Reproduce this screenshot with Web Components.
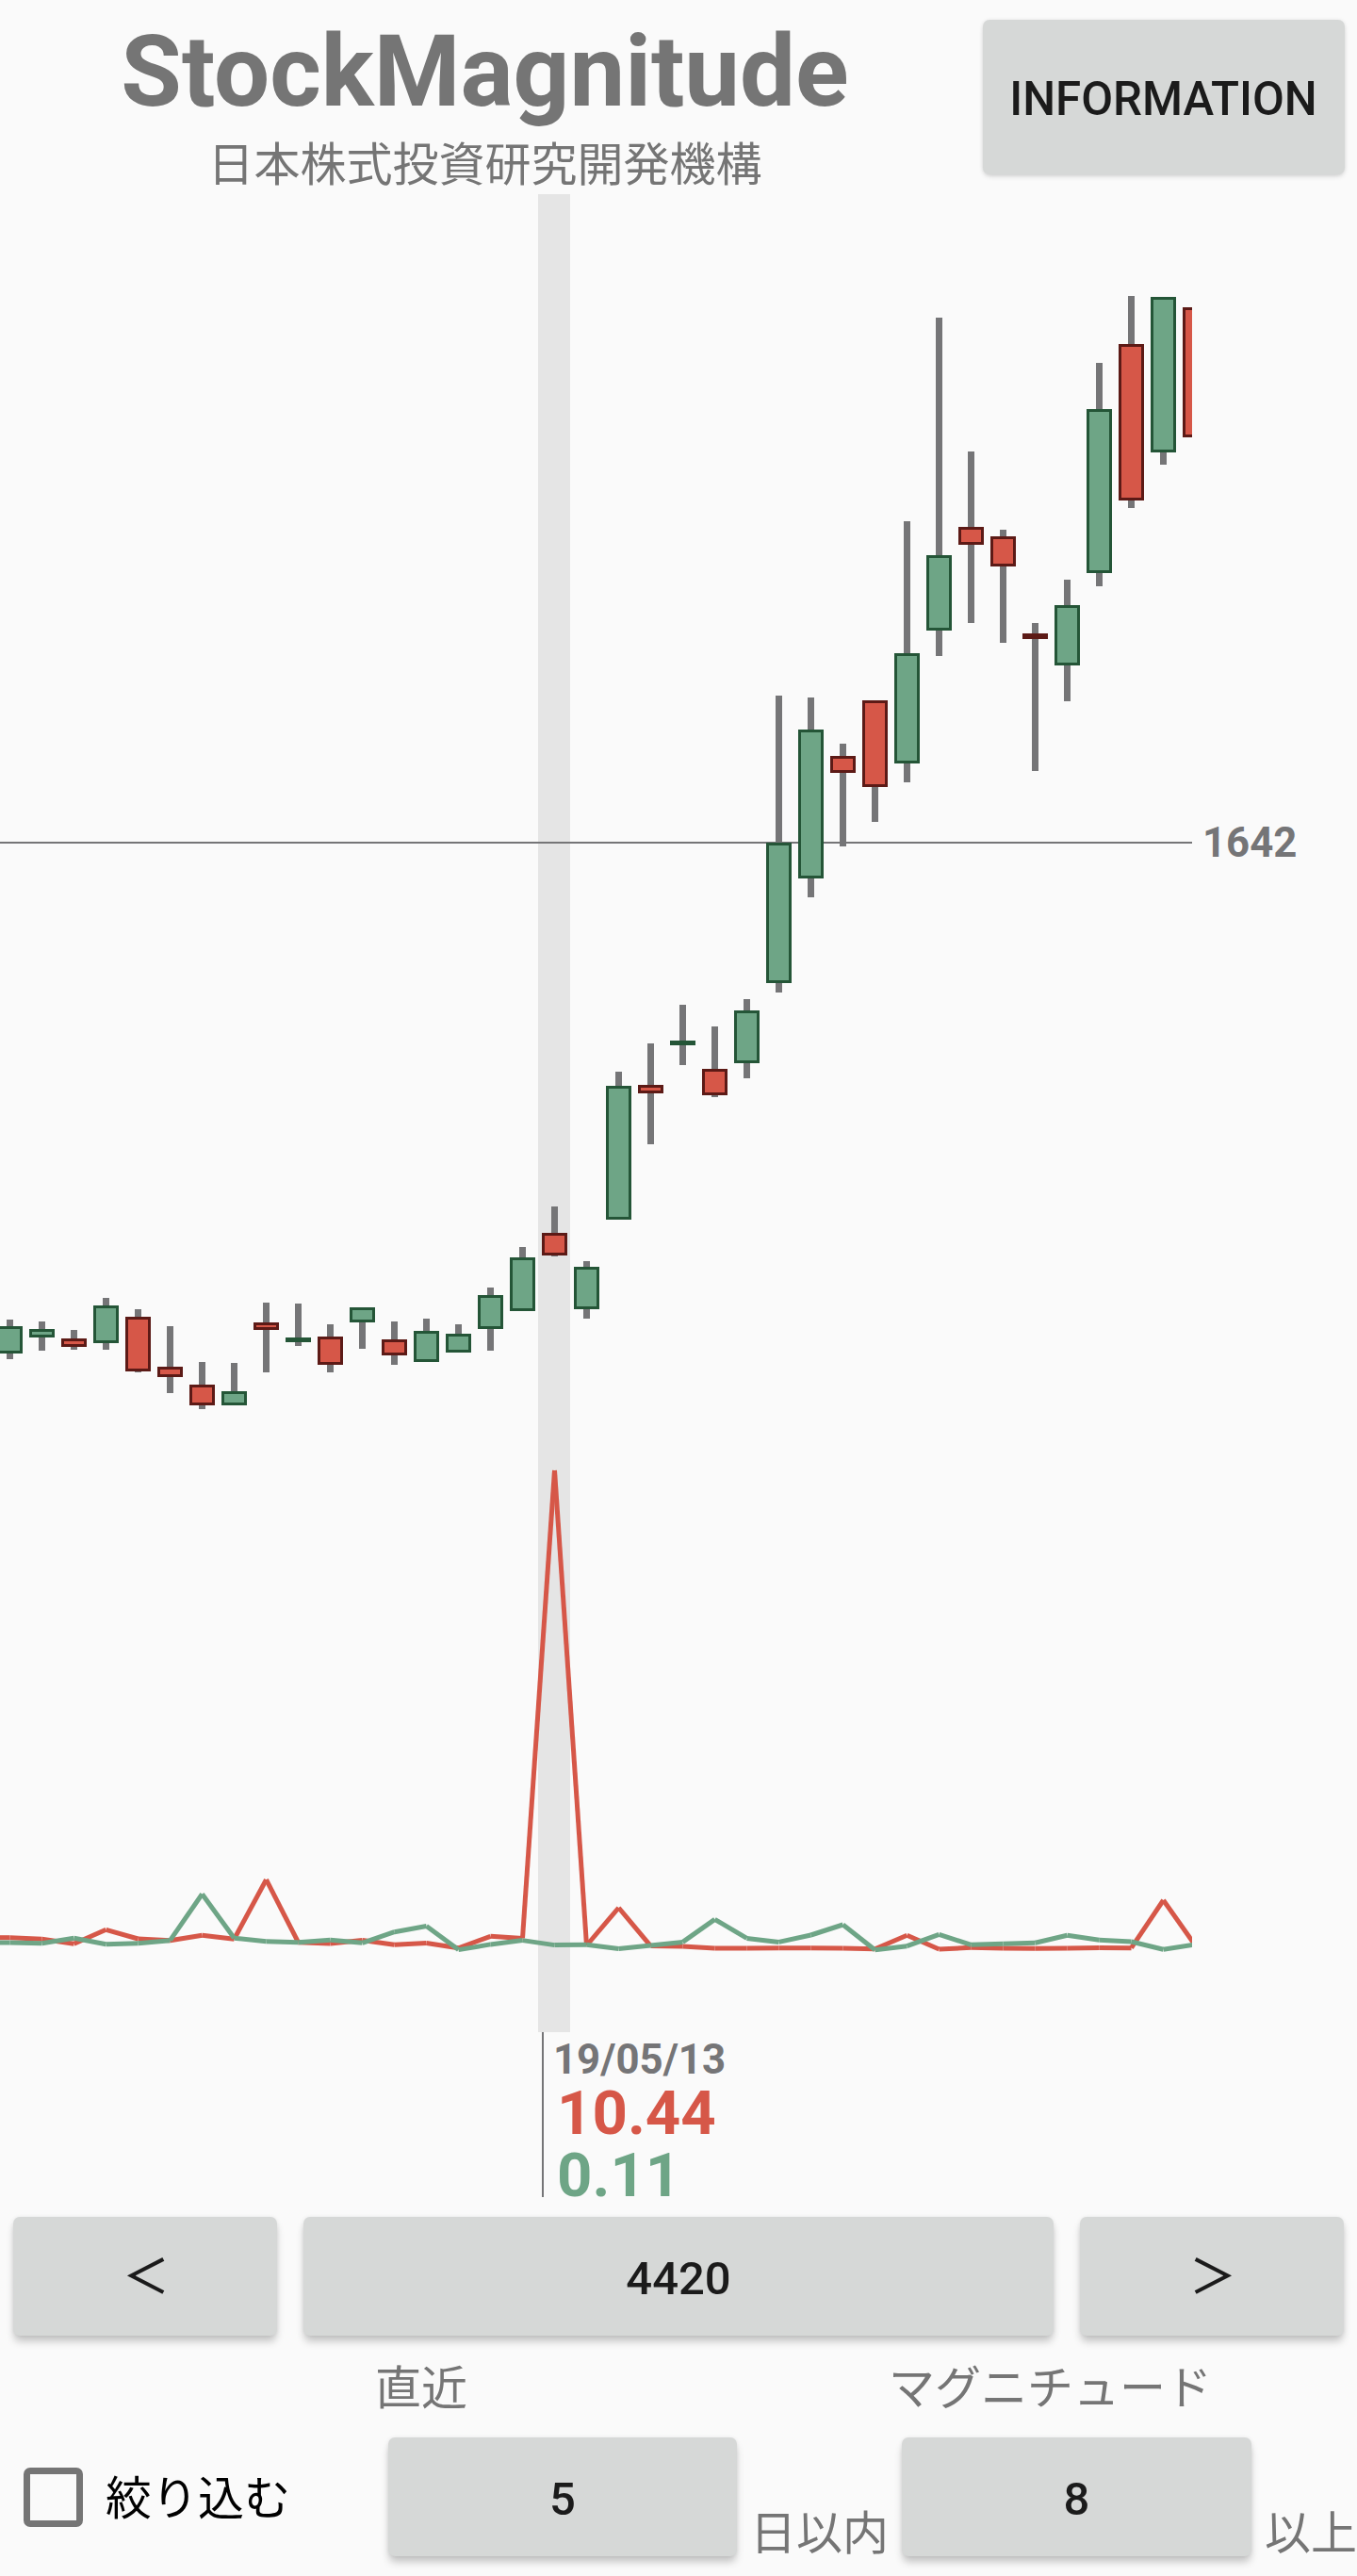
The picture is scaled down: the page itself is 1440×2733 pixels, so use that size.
<!DOCTYPE html>
<html lang="ja">
<head>
<meta charset="utf-8">
<title>StockMagnitude</title>
<style>
    body {
        margin: 0;
        background: #fafafa;
        font-family: Roboto, "Noto Sans CJK JP", sans-serif;
    }
</style>
</head>
<body>
<stock-app></stock-app>

<script>
// [上ヒゲ, 下ヒゲ, 実体上端, 実体下端, 陽線=1 / 陰線=0]
const CANDLES = [
    [1400, 1442, 1407, 1436, 1], [1402, 1433, 1410, 1419, 1], [1411, 1432, 1420, 1429, 0],
    [1377, 1432, 1385, 1425, 1], [1389, 1456, 1397, 1455, 0], [1407, 1478, 1450, 1461, 0],
    [1445, 1495, 1469, 1491, 0], [1446, 1491, 1476, 1491, 1], [1382, 1456, 1403, 1411, 0],
    [1383, 1428, 1419, 1424, 1], [1405, 1456, 1418, 1448, 0], [1387, 1431, 1387, 1403, 1],
    [1402, 1448, 1421, 1438, 0], [1399, 1445, 1412, 1445, 1], [1405, 1435, 1415, 1435, 1],
    [1366, 1433, 1374, 1410, 1], [1323, 1391, 1334, 1391, 1], [1280, 1333, 1308, 1332, 0],
    [1338, 1399, 1344, 1389, 1], [1137, 1294, 1152, 1294, 1], [1107, 1214, 1151, 1160, 0],
    [1066, 1130, 1104, 1109, 1], [1089, 1164, 1134, 1162, 0], [1060, 1144, 1072, 1128, 1],
    [738, 1053, 894, 1043, 1], [740, 952, 774, 932, 1], [789, 898, 802, 820, 0],
    [743, 872, 743, 835, 0], [553, 830, 693, 810, 1], [337, 696, 589, 669, 1],
    [479, 661, 559, 578, 0], [562, 682, 569, 601, 0], [661, 818, 672, 678, 0],
    [615, 744, 642, 706, 1], [385, 622, 434, 608, 1], [314, 539, 365, 531, 0],
    [315, 493, 315, 480, 1], [326, 464, 326, 464, 0]
];

const RED_LINE = [
    2055.7, 2057.3, 2062.3, 2047.3, 2057, 2058.7, 2053.3, 2057.3, 1994.2, 2060.7,
    2062, 2058.5, 2063.3, 2061.5, 2066.8, 2054.3, 2056.4, 1560, 2064, 2024,
    2064.6, 2065, 2067, 2067, 2066.8, 2066.8, 2067, 2067.7, 2053.3, 2068,
    2066.3, 2067, 2067.3, 2067, 2066.5, 2066.7, 2016, 2064
];

const GREEN_LINE = [
    2061, 2061.7, 2056.3, 2062.7, 2061.7, 2058.7, 2009.5, 2056.3, 2059.7, 2060.7,
    2058.3, 2061.3, 2049.7, 2043.5, 2068.6, 2062.9, 2058.6, 2063.6, 2063.2, 2067.5,
    2064, 2060.4, 2036.4, 2056.4, 2060.4, 2053, 2042, 2068.7, 2064.7, 2052.3,
    2063.3, 2062.3, 2061.3, 2053.3, 2058.3, 2060, 2068.3, 2063
];

const STEP = 34;
const FIRST_X = 10.5;
const xAt = (i) => FIRST_X + STEP * i;

class StockChart extends HTMLElement {
    constructor() {
        super();
        const shadow = this.attachShadow({ mode: 'open' });
        shadow.innerHTML = `
            <style>
                :host {
                    display: flex;
                    height: 1950px;
                }
                svg {
                    display: block;
                    flex: none;
                }
                .axis {
                    padding: 663px 0 0 11px;
                    color: #757577;
                    font-size: 43.75px;
                    line-height: 50px;
                    font-weight: 700;
                }
            </style>
            <svg width="1265" height="1950" viewBox="0 206 1265 1950"></svg>
            <div class="axis"><slot></slot></div>
        `;
    }

    connectedCallback() {
        this.render();
    }

    render() {
        const parts = [
            '<rect x="571" y="206" width="34" height="1950" fill="#e5e5e5"/>',
            '<rect x="0" y="893" width="1265" height="2" fill="#757577"/>'
        ];
        CANDLES.forEach(([high, low, top, bottom, up], i) => {
            const x = xAt(i);
            // 最後の足は実体の左側だけ見える
            if (i < CANDLES.length - 1) {
                parts.push(`<rect x="${x - 3.5}" y="${high}" width="7" height="${low - high}" fill="#757577"/>`);
            }
            parts.push(`<rect x="${x - 13.5}" y="${top}" width="27" height="${bottom - top}" fill="${up ? '#245537' : '#5c1a16'}"/>`);
            if (bottom - top > 6) {
                parts.push(`<rect x="${x - 10.5}" y="${top + 3}" width="21" height="${bottom - top - 6}" fill="${up ? '#6ea586' : '#d65748'}"/>`);
            }
        });
        parts.push(this.line(RED_LINE, '#d65748'), this.line(GREEN_LINE, '#6ea586'));
        this.shadowRoot.querySelector('svg').innerHTML = parts.join('');
    }

    // 一区間ずつ独立した線分で描く
    line(points, color) {
        let out = `<line x1="-2" y1="${points[0]}" x2="${FIRST_X}" y2="${points[0]}" stroke="${color}" stroke-width="5"/>`;
        for (let i = 1; i < points.length; i++) {
            out += `<line x1="${xAt(i - 1)}" y1="${points[i - 1]}" x2="${xAt(i)}" y2="${points[i]}" stroke="${color}" stroke-width="5"/>`;
        }
        return out;
    }
}

class ChartLegend extends HTMLElement {
    constructor() {
        super();
        const shadow = this.attachShadow({ mode: 'open' });
        shadow.innerHTML = `
            <style>
                :host {
                    display: block;
                    box-sizing: border-box;
                    height: 175px;
                    margin-left: 575px;
                    border-left: 2px solid #757577;
                    overflow: hidden;
                    font-weight: 700;
                    white-space: nowrap;
                }
                .date {
                    padding: 3px 0 0 10px;
                    font-size: 43.75px;
                    line-height: 52px;
                    height: 50px;
                    color: #757577;
                }
                .value {
                    padding-left: 14px;
                    font-size: 65.3px;
                    line-height: 66px;
                }
                .up { color: #d65748; }
                .down { color: #6ea586; }
            </style>
            <div class="date"></div>
            <div class="value up"></div>
            <div class="value down"></div>
        `;
    }

    connectedCallback() {
        const root = this.shadowRoot;
        root.querySelector('.date').textContent = this.getAttribute('date');
        root.querySelector('.up').textContent = this.getAttribute('up');
        root.querySelector('.down').textContent = this.getAttribute('down');
    }
}

class PushButton extends HTMLElement {
    constructor() {
        super();
        const shadow = this.attachShadow({ mode: 'open' });
        shadow.innerHTML = `
            <style>
                :host {
                    display: flex;
                    align-items: center;
                    justify-content: center;
                    box-sizing: border-box;
                    height: 126px;
                    padding-top: 4px;
                    border-radius: 7px;
                    background: #d6d8d7;
                    box-shadow: 0 7px 8px -1px rgba(0, 0, 0, 0.22), 0 0 4px rgba(0, 0, 0, 0.07);
                    color: #1b1b1b;
                    font-size: 49px;
                    line-height: 57px;
                    font-weight: 500;
                    white-space: nowrap;
                }
            </style>
            <slot></slot>
        `;
    }
}

class CheckItem extends HTMLElement {
    constructor() {
        super();
        const shadow = this.attachShadow({ mode: 'open' });
        shadow.innerHTML = `
            <style>
                :host {
                    display: flex;
                    align-items: center;
                    gap: 24px;
                    box-sizing: border-box;
                    height: 126px;
                    color: #000;
                    font-size: 49px;
                    line-height: 72px;
                    white-space: nowrap;
                }
                .box {
                    box-sizing: border-box;
                    width: 63px;
                    height: 63px;
                    border: 7px solid #757575;
                    border-radius: 7px;
                }
                .text { padding-top: 5px; }
            </style>
            <div class="box"></div>
            <div class="text"><slot></slot></div>
        `;
    }
}

class StockApp extends HTMLElement {
    constructor() {
        super();
        const shadow = this.attachShadow({ mode: 'open' });
        shadow.innerHTML = `
            <style>
                :host {
                    display: block;
                    box-sizing: border-box;
                    width: 1440px;
                    height: 2733px;
                    overflow: hidden;
                    color: #757575;
                    font-size: 49px;
                    line-height: 72px;
                }
                header {
                    display: grid;
                    grid-template-columns: 1029px 384px;
                    column-gap: 14px;
                    height: 206px;
                }
                .brand { text-align: center; }
                h1 {
                    margin: 0;
                    padding-top: 15px;
                    font-size: 104.8px;
                    line-height: 123px;
                    font-weight: 700;
                    color: #757575;
                }
                .subtitle { padding-top: 2px; }
                .info {
                    height: 164px;
                    margin-top: 21px;
                    padding: 5px 1px 0 0;
                    font-size: 49.2px;
                    box-shadow: 0 3px 6px -2px rgba(0, 0, 0, 0.2), 0 0 4px rgba(0, 0, 0, 0.07);
                }
                nav {
                    display: grid;
                    grid-template-columns: 280px 796px 280px;
                    column-gap: 28px;
                    padding: 21px 14px 0;
                }
                .arrow {
                    padding: 3px 0 0 2px;
                    font-size: 50px;
                }
                .filter {
                    display: grid;
                    grid-template-columns: 412px 370px 175px 371px 112px;
                    white-space: nowrap;
                }
                .label {
                    height: 108px;
                    box-sizing: border-box;
                    padding-top: 21px;
                }
                .near { margin-left: -14px; }
                .mag { margin-left: -14px; }
                .filter check-item { padding-left: 25px; }
                .unit { padding: 67px 0 0 14px; }
            </style>
            <header>
                <div class="brand">
                    <h1>StockMagnitude</h1>
                    <div class="subtitle">日本株式投資研究開発機構</div>
                </div>
                <push-button class="info">INFORMATION</push-button>
            </header>
            <stock-chart>1642</stock-chart>
            <chart-legend date="19/05/13" up="10.44" down="0.11"></chart-legend>
            <nav>
                <push-button class="arrow">＜</push-button>
                <push-button>4420</push-button>
                <push-button class="arrow">＞</push-button>
            </nav>
            <div class="filter">
                <div class="label"></div>
                <div class="label near">直近</div>
                <div class="label"></div>
                <div class="label mag">マグニチュード</div>
                <div class="label"></div>
                <check-item>絞り込む</check-item>
                <push-button>5</push-button>
                <div class="unit">日以内</div>
                <push-button>8</push-button>
                <div class="unit">以上</div>
            </div>
        `;
    }
}

customElements.define('stock-chart', StockChart);
customElements.define('chart-legend', ChartLegend);
customElements.define('push-button', PushButton);
customElements.define('check-item', CheckItem);
customElements.define('stock-app', StockApp);
</script>
</body>
</html>
